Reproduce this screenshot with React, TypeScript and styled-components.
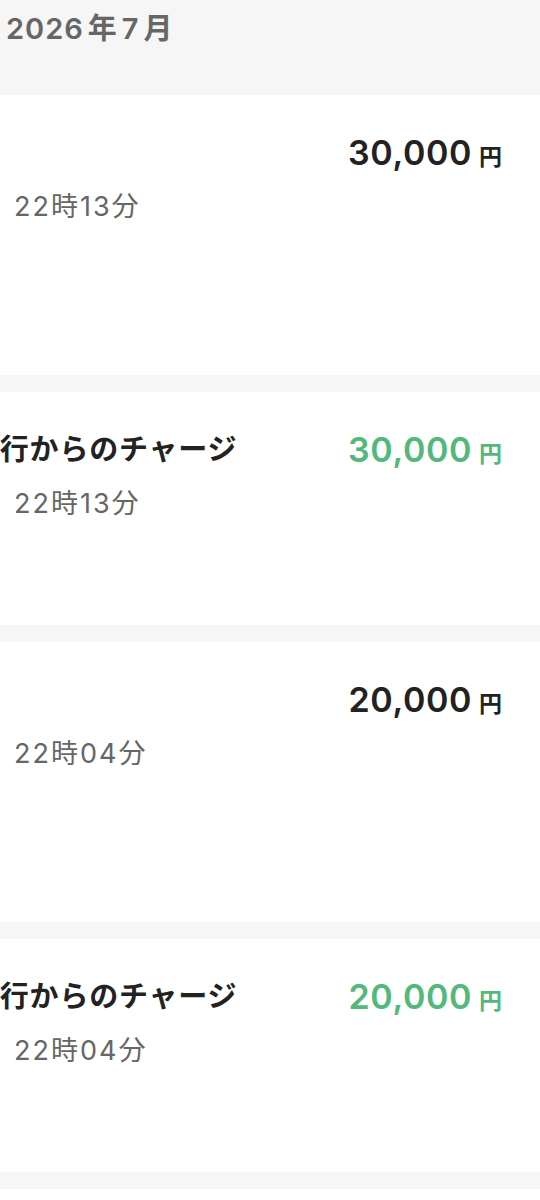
import styled, { createGlobalStyle } from 'styled-components'

const GlobalStyle = createGlobalStyle`
    html, body {
        margin: 0;
        padding: 0;
        background: #f6f6f6;
    }
    body {
        font-family: Inter, "Noto Sans CJK JP", sans-serif;
        -webkit-font-smoothing: antialiased;
    }
`

const Page = styled.div`
    width: 540px;
    min-height: 1200px;
    background: #f6f6f6;
    overflow: hidden;
`

const MonthHeader = styled.h2`
    margin: 0;
    height: 95px;
    box-sizing: border-box;
    padding: 11px 0 0 6px;
    font-size: 29px;
    line-height: 36px;
    font-weight: 600;
    color: #666;
    letter-spacing: 1px;
`

const Unit = styled.span`
    margin: 0 4px;
`

const List = styled.ul`
    list-style: none;
    margin: 0;
    padding: 0;
    display: flex;
    flex-direction: column;
    gap: 17px;
`

const Card = styled.li<{ $tall?: boolean }>`
    background: #fff;
    min-height: ${(p) => (p.$tall ? 280 : 233)}px;
    box-sizing: border-box;
    padding: 40px 38px 0 0;
    overflow: hidden;
    display: flex;
    justify-content: space-between;
    align-items: flex-start;
`

const Info = styled.div`
    margin-left: -30px;
    display: flex;
    flex-direction: column;
    min-width: 0;
`

const Title = styled.div`
    min-height: 36px;
    font-size: 29px;
    line-height: 36px;
    font-weight: 700;
    color: #222;
    letter-spacing: 0.8px;
    white-space: nowrap;
`

const Meta = styled.div`
    margin-top: 20px;
    margin-left: -27px;
    display: flex;
    gap: 11px;
    font-size: 27px;
    line-height: 32px;
    color: #666;
    letter-spacing: 2px;
    white-space: nowrap;
`

const DateLabel = styled.span`
    width: 60px;
    display: flex;
    justify-content: flex-end;
`

const Amount = styled.div<{ $income?: boolean }>`
    font-size: 34px;
    line-height: 36px;
    font-weight: 600;
    letter-spacing: 0.6px;
    color: ${(p) => (p.$income ? '#52b87c' : '#222')};
    white-space: nowrap;
`

const Yen = styled.span`
    margin-left: 7px;
    font-size: 23px;
    letter-spacing: 0;
`

type Entry = {
    title: string;
    date: string;
    time: string;
    amount: string;
    income: boolean;
    tall: boolean;
}

const entries: Entry[] = [
    { title: '', date: '11日', time: '22時13分', amount: '30,000', income: false, tall: true },
    { title: '銀行からのチャージ', date: '11日', time: '22時13分', amount: '30,000', income: true, tall: false },
    { title: '', date: '11日', time: '22時04分', amount: '20,000', income: false, tall: true },
    { title: '銀行からのチャージ', date: '11日', time: '22時04分', amount: '20,000', income: true, tall: false },
    { title: '', date: '10日', time: '18時42分', amount: '5,000', income: false, tall: true },
]

export default function App() {
    return (
        <>
            <GlobalStyle />
            <Page>
                <MonthHeader>
                    2026<Unit>年</Unit>7<Unit>月</Unit>
                </MonthHeader>
                <List>
                    {entries.map((e, i) => (
                        <Card key={i} $tall={e.tall}>
                            <Info>
                                <Title>{e.title}</Title>
                                <Meta>
                                    <DateLabel>{e.date}</DateLabel>
                                    <span>{e.time}</span>
                                </Meta>
                            </Info>
                            <Amount $income={e.income}>
                                {e.amount}
                                <Yen>円</Yen>
                            </Amount>
                        </Card>
                    ))}
                </List>
            </Page>
        </>
    )
}
